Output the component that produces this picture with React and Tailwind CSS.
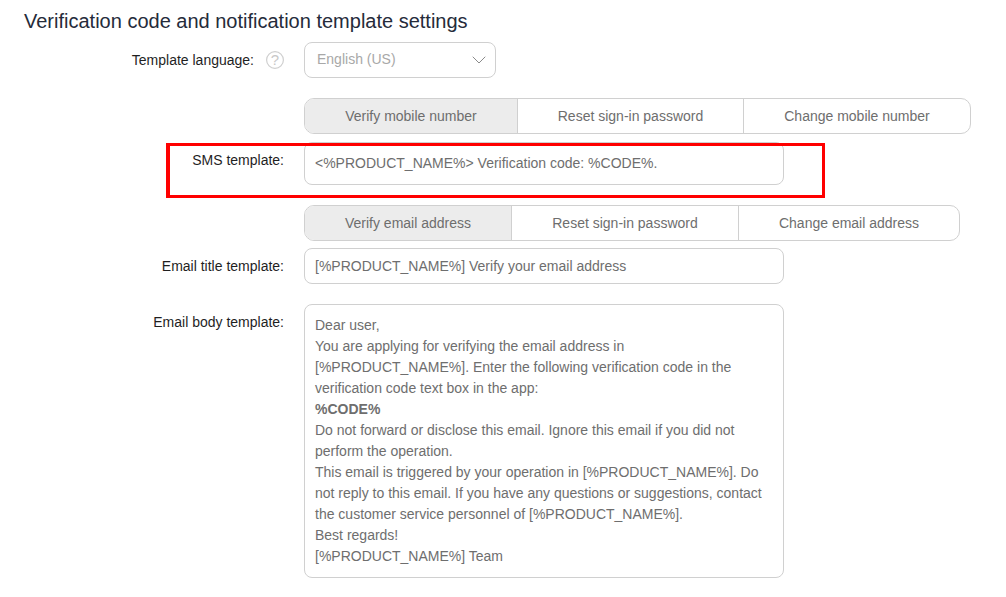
import React from 'react';
import { ChevronDown } from 'lucide-react';

function Tabs({ items, widths }) {
  return (
    <div className="flex h-9 w-fit rounded-[10px] border border-[#d0d0d0] text-[14px] text-[#6e6e6e] overflow-hidden">
      {items.map((item, i) => (
        <div
          key={item}
          className={
            i === 0
              ? 'flex items-center justify-center bg-[#ececec] ' + widths[i]
              : 'flex items-center justify-center border-l border-[#d0d0d0] ' + widths[i]
          }
        >
          {item}
        </div>
      ))}
    </div>
  );
}

function Label({ children, className }) {
  return <div className={'w-[284px] shrink-0 text-right text-[14px] text-[#1f1f1f] ' + className}>{children}</div>;
}

export default function App() {
  return (
    <div className="relative h-[597px] w-[1006px] overflow-hidden bg-white font-['Liberation_Sans',Arial,sans-serif]">
      <h1 className="pl-6 pt-[9px] text-[20px] leading-[24px] text-[#252b3a]">
        Verification code and notification template settings
      </h1>

      <div className="mt-[9px] flex items-center">
        <div className="flex w-[284px] shrink-0 items-center justify-end gap-3 text-[14px] text-[#1f1f1f]">
          <span>Template language:</span>
          <svg className="mb-px h-[18px] w-[18px]" viewBox="0 0 18 18" fill="none">
            <circle cx="9" cy="9" r="8.4" stroke="#cfcfcf" strokeWidth="1.2" />
            <text x="9" y="14" textAnchor="middle" fontSize="15" fill="#c8c8c8" fontFamily="Liberation Sans">?</text>
          </svg>
        </div>
        <div className="ml-5 flex h-9 w-[192px] items-center justify-between rounded-[8px] border border-[#d0d0d0] pb-[2px] pl-3 pr-1 text-[14px] text-[#a8a8a8]">
          <span>English (US)</span>
          <ChevronDown size={24} strokeWidth={1} className="mt-[2px] text-[#8a8a8a]" />
        </div>
      </div>

      <div className="ml-[304px] mt-5">
        <Tabs
          items={['Verify mobile number', 'Reset sign-in password', 'Change mobile number']}
          widths={['w-[212px]', 'w-[226px]', 'w-[227px]']}
        />
      </div>

      <div className="mt-2 flex">
        <Label className="pt-[8px]">SMS template:</Label>
        <div className="ml-5 h-[43px] w-[480px] rounded-[8px] border border-[#d0d0d0] px-[10px] pt-[12px] text-[14px] leading-[17px] text-[#6e6e6e]">
          {'<%PRODUCT_NAME%> Verification code: %CODE%.'}
        </div>
      </div>

      <div className="ml-[304px] mt-5">
        <Tabs
          items={['Verify email address', 'Reset sign-in password', 'Change email address']}
          widths={['w-[206px]', 'w-[227px]', 'w-[221px]']}
        />
      </div>

      <div className="mt-[7px] flex">
        <Label className="pt-[8px]">Email title template:</Label>
        <div className="ml-5 flex h-9 w-[480px] items-center rounded-[8px] border border-[#d0d0d0] px-[10px] text-[14px] text-[#6e6e6e]">
          [%PRODUCT_NAME%] Verify your email address
        </div>
      </div>

      <div className="mt-5 flex">
        <Label className="pt-[8px]">Email body template:</Label>
        <div className="ml-5 h-[274px] w-[480px] rounded-[8px] border border-[#d0d0d0] px-[10px] pt-[10px] text-[14px] leading-[21px] text-[#6e6e6e]">
          <div>Dear user,</div>
          <div>You are applying for verifying the email address in</div>
          <div>[%PRODUCT_NAME%]. Enter the following verification code in the</div>
          <div>verification code text box in the app:</div>
          <div className="font-bold">%CODE%</div>
          <div>Do not forward or disclose this email. Ignore this email if you did not</div>
          <div>perform the operation.</div>
          <div>This email is triggered by your operation in [%PRODUCT_NAME%]. Do</div>
          <div>not reply to this email. If you have any questions or suggestions, contact</div>
          <div>the customer service personnel of [%PRODUCT_NAME%].</div>
          <div>Best regards!</div>
          <div>[%PRODUCT_NAME%] Team</div>
        </div>
      </div>

      <div className="absolute left-[166px] top-[143px] h-[55px] w-[659px] border-[3px] border-l-4 border-[#ff0000]" />
    </div>
  );
}
